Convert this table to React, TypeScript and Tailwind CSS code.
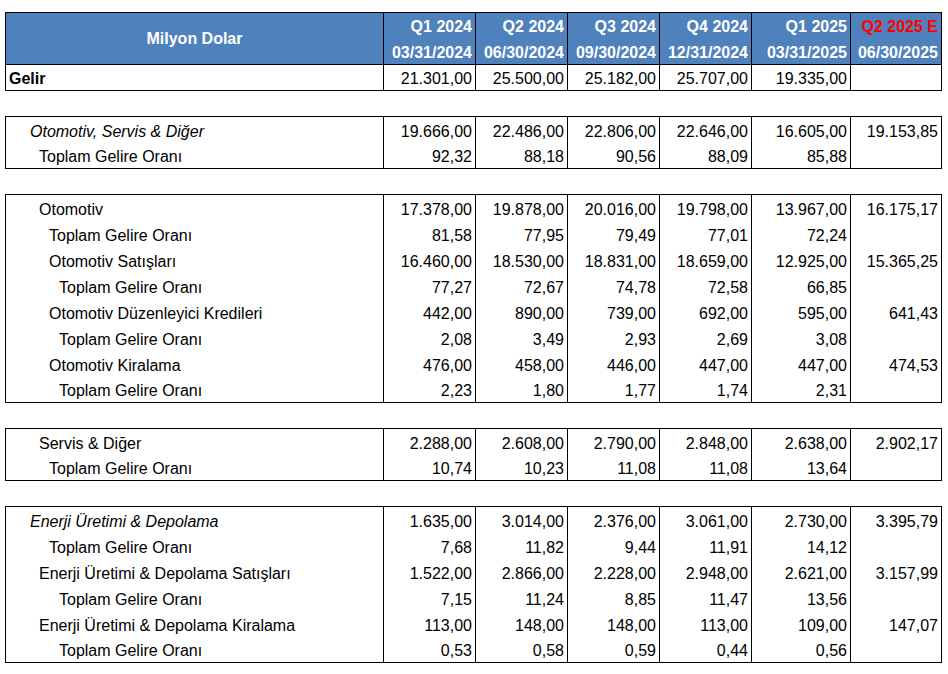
import React from "react";

type Row = { label: string; pad: string; style?: string; vals: string[] };

const COLS = "grid grid-cols-[378px_92px_92px_92px_92px_99px_90px]";

const groups: Row[][] = [
  [
    {
      label: "Otomotiv, Servis & Diğer",
      pad: "pl-[24px]",
      style: "italic",
      vals: ["19.666,00", "22.486,00", "22.806,00", "22.646,00", "16.605,00", "19.153,85"],
    },
    { label: "Toplam Gelire Oranı", pad: "pl-[33px]", vals: ["92,32", "88,18", "90,56", "88,09", "85,88", ""] },
  ],
  [
    { label: "Otomotiv", pad: "pl-[33px]", vals: ["17.378,00", "19.878,00", "20.016,00", "19.798,00", "13.967,00", "16.175,17"] },
    { label: "Toplam Gelire Oranı", pad: "pl-[43px]", vals: ["81,58", "77,95", "79,49", "77,01", "72,24", ""] },
    { label: "Otomotiv Satışları", pad: "pl-[43px]", vals: ["16.460,00", "18.530,00", "18.831,00", "18.659,00", "12.925,00", "15.365,25"] },
    { label: "Toplam Gelire Oranı", pad: "pl-[53px]", vals: ["77,27", "72,67", "74,78", "72,58", "66,85", ""] },
    { label: "Otomotiv Düzenleyici Kredileri", pad: "pl-[43px]", vals: ["442,00", "890,00", "739,00", "692,00", "595,00", "641,43"] },
    { label: "Toplam Gelire Oranı", pad: "pl-[53px]", vals: ["2,08", "3,49", "2,93", "2,69", "3,08", ""] },
    { label: "Otomotiv Kiralama", pad: "pl-[43px]", vals: ["476,00", "458,00", "446,00", "447,00", "447,00", "474,53"] },
    { label: "Toplam Gelire Oranı", pad: "pl-[53px]", vals: ["2,23", "1,80", "1,77", "1,74", "2,31", ""] },
  ],
  [
    { label: "Servis & Diğer", pad: "pl-[33px]", vals: ["2.288,00", "2.608,00", "2.790,00", "2.848,00", "2.638,00", "2.902,17"] },
    { label: "Toplam Gelire Oranı", pad: "pl-[43px]", vals: ["10,74", "10,23", "11,08", "11,08", "13,64", ""] },
  ],
  [
    {
      label: "Enerji Üretimi & Depolama",
      pad: "pl-[24px]",
      style: "italic",
      vals: ["1.635,00", "3.014,00", "2.376,00", "3.061,00", "2.730,00", "3.395,79"],
    },
    { label: "Toplam Gelire Oranı", pad: "pl-[43px]", vals: ["7,68", "11,82", "9,44", "11,91", "14,12", ""] },
    { label: "Enerji Üretimi & Depolama Satışları", pad: "pl-[33px]", vals: ["1.522,00", "2.866,00", "2.228,00", "2.948,00", "2.621,00", "3.157,99"] },
    { label: "Toplam Gelire Oranı", pad: "pl-[53px]", vals: ["7,15", "11,24", "8,85", "11,47", "13,56", ""] },
    { label: "Enerji Üretimi & Depolama Kiralama", pad: "pl-[33px]", vals: ["113,00", "148,00", "148,00", "113,00", "109,00", "147,07"] },
    { label: "Toplam Gelire Oranı", pad: "pl-[53px]", vals: ["0,53", "0,58", "0,59", "0,44", "0,56", ""] },
  ],
];

const headers = [
  { q: "Q1 2024", d: "03/31/2024", red: false },
  { q: "Q2 2024", d: "06/30/2024", red: false },
  { q: "Q3 2024", d: "09/30/2024", red: false },
  { q: "Q4 2024", d: "12/31/2024", red: false },
  { q: "Q1 2025", d: "03/31/2025", red: false },
  { q: "Q2 2025 E", d: "06/30/2025", red: true },
];

function DataRow({ row }: { row: Row }) {
  return (
    <div className={`${COLS} h-[26px] last:h-[25px]`}>
      <div className={`border-r border-black flex items-center pt-[3px] ${row.pad} ${row.style ?? ""}`}>{row.label}</div>
      {row.vals.map((v, i) => (
        <div
          key={i}
          className={`flex items-center justify-end pt-[3px] pr-[3px] ${i < row.vals.length - 1 ? "border-r border-black" : ""}`}
        >
          {v}
        </div>
      ))}
    </div>
  );
}

export default function App() {
  return (
    <div
      className="bg-white w-[948px] h-[674px] pt-[12px] pl-[5px] text-[16px] leading-none text-black"
      style={{ fontFamily: '"Liberation Sans", Arial, sans-serif' }}
    >
      <div className="w-[937px] border border-black">
        <div className={`${COLS} h-[52px] bg-[#4f81bd] border-b border-black font-bold text-white`}>
          <div className="border-r border-black flex items-center justify-center">Milyon Dolar</div>
          {headers.map((h, i) => (
            <div
              key={i}
              className={`flex flex-col justify-start items-end pt-[1px] pr-[3px] ${i < headers.length - 1 ? "border-r border-black" : ""}`}
            >
              <div className={`h-[26px] shrink-0 flex items-center ${h.red ? "text-[#ff0000]" : ""}`}>{h.q}</div>
              <div className="h-[24px] shrink-0 flex items-center pt-[2px]">{h.d}</div>
            </div>
          ))}
        </div>
        <div className={`${COLS} h-[25px]`}>
          <div className="border-r border-black flex items-center pt-[2px] pl-[3px] font-bold">Gelir</div>
          {["21.301,00", "25.500,00", "25.182,00", "25.707,00", "19.335,00", ""].map((v, i) => (
            <div key={i} className={`flex items-center justify-end pt-[2px] pr-[3px] ${i < 5 ? "border-r border-black" : ""}`}>
              {v}
            </div>
          ))}
        </div>
      </div>
      {groups.map((g, gi) => (
        <div key={gi} className="w-[937px] border border-black mt-[25px]">
          {g.map((r, ri) => (
            <DataRow key={ri} row={r} />
          ))}
        </div>
      ))}
    </div>
  );
}
